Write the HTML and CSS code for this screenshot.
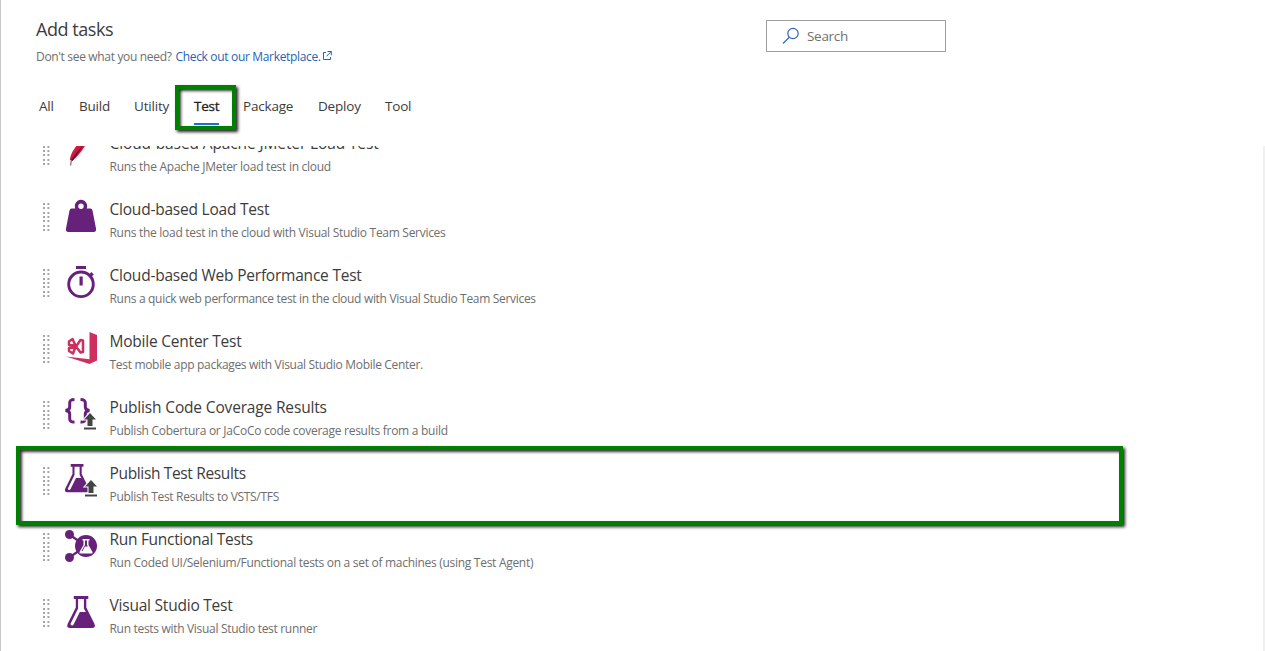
FILE: index.html
```
<!DOCTYPE html>
<html lang="en">
<head>
<meta charset="utf-8">
<title>Add tasks</title>
<link rel="stylesheet" href="styles.css">
</head>
<body>
<svg class="defs" width="0" height="0" aria-hidden="true">
  <defs>
    <g id="grip" fill="#a6a6a6">
      <path id="gripcol" d="M1 1h2v2H1zM1 5h2v2H1zM1 10h2v2H1zM1 14h2v2H1zM1 18h2v2H1zM1 23h2v2H1zM1 27h2v2H1z"/>
      <use href="#gripcol" x="4.4"/>
    </g>
    <g id="flask">
      <path d="M6.500 0h14.500v3h-2v8.500L27 27.500q2 4.500-2.500 4.500h-21.500q-4.500 0-2.500-4.500L8.500 11.500V3h-2z" fill="#68217a"/>
      <path d="M10.800 3h5.800v9.500L18.500 16H12.500L6.300 28.500q-.5 1.300-2.300.8-1.200-.6-.6-1.800L10.800 12.500z" fill="#fff"/>
    </g>
    <g id="upload">
      <path d="M6 0l6 6.500H8.500V13h-5V6.500H0z" fill="#444" stroke="#fff" stroke-width="2" paint-order="stroke"/>
      <path d="M0 14.500h12v2H0z" fill="#444"/>
    </g>
  </defs>
</svg>
<main class="panel">
  <header class="header">
    <div class="heading">
      <h1 class="title">Add tasks</h1>
      <p class="hint"><span class="ask">Don't see what you need?</span> <a class="link">Check out our Marketplace.</a><svg class="external" width="10" height="10" viewBox="0 0 10 10" fill="none" stroke="#2464b4"><path d="M4 1.500H1.500v7h7V6M5.500.5h3.800v3.800M9 .8L4.500 5.300"/></svg></p>
    </div>
    <div class="search">
      <svg width="18" height="18" viewBox="0 0 18 18" fill="none" stroke="#2f68c0" stroke-width="1.200"><circle cx="11" cy="6.500" r="5.200"/><path d="M7.300 10.300L1 16.500"/></svg>
      <span class="placeholder">Search</span>
    </div>
  </header>
  <nav class="tabs">
    <span class="tab t-all">All</span><span class="tab t-build">Build</span><span class="tab t-utility">Utility</span><span class="tab t-test active">Test</span><span class="tab t-package">Package</span><span class="tab t-deploy">Deploy</span><span class="tab t-tool">Tool</span>
  </nav>
  <section class="list">
    <article class="task">
      <svg class="grip" width="9" height="30"><use href="#grip"/></svg>
      <svg class="icon" width="32" height="32" viewBox="0 0 32 32"><path d="M5 26C5 20 10 13 15 8L25 0C22 10 16 20 7 27z" fill="#d6163c"/><path d="M6 26Q12 17 18.500 11Q13 20 7.500 27z" fill="#5b1038"/><path d="M6.500 26L5.500 31.500" stroke="#777" stroke-width="1.300"/></svg>
      <div class="text"><h2 class="name n1">Cloud-based Apache JMeter Load Test</h2><p class="desc d1">Runs the Apache JMeter load test in cloud</p></div>
    </article>
    <article class="task">
      <svg class="grip" width="9" height="30"><use href="#grip"/></svg>
      <svg class="icon" width="32" height="32" viewBox="0 0 32 32"><path d="M6.500 8.500h3.800a6.200 6.200 0 1 1 11.400 0h3.800q1.500 0 2 2L31 28.500q.5 3.500-2.500 3.500h-25Q.5 32 1 28.500L4.500 10.500q.5-2 2-2z" fill="#68217a"/><circle cx="16" cy="6.300" r="2.700" fill="#fff"/></svg>
      <div class="text"><h2 class="name n2">Cloud-based Load Test</h2><p class="desc d2">Runs the load test in the cloud with Visual Studio Team Services</p></div>
    </article>
    <article class="task">
      <svg class="grip" width="9" height="30"><use href="#grip"/></svg>
      <svg class="icon" width="32" height="32" viewBox="0 0 32 32"><circle cx="16" cy="18.300" r="12.300" fill="none" stroke="#68217a" stroke-width="2.900"/><path d="M11 0h10v3H11zM14.500 10.500h3.200v9h-3.200zM24 8.500L26.500 6l2.300 2.500-2.500 2.300z" fill="#68217a"/></svg>
      <div class="text"><h2 class="name n3">Cloud-based Web Performance Test</h2><p class="desc d3">Runs a quick web performance test in the cloud with Visual Studio Team Services</p></div>
    </article>
    <article class="task">
      <svg class="grip" width="9" height="30"><use href="#grip"/></svg>
      <svg class="icon" width="32" height="32" viewBox="0 0 32 32"><path d="M24.500 0L32 3v25.500L24.500 32 1 24.500l23.500 2.700z" fill="#cf2f5f"/><path d="M18 8.500v11.500l-2.500.5-4.500-6 4.500-6.500zM10.500 13.500L4 13V9.500L7.500 7zM10.500 15L4 16v3l4 2.500z" fill="none" stroke="#cf2f5f" stroke-width="2.500" stroke-linejoin="round"/></svg>
      <div class="text"><h2 class="name n4">Mobile Center Test</h2><p class="desc d4">Test mobile app packages with Visual Studio Mobile Center.</p></div>
    </article>
    <article class="task">
      <svg class="grip" width="9" height="30"><use href="#grip"/></svg>
      <svg class="icon" width="32" height="32" viewBox="0 0 32 32"><g fill="none" stroke="#68217a" stroke-width="3"><path d="M9.500 1.500Q4.500 1.500 4.700 5v4q0 3-4.200 3.500 4.200.5 4.200 3.500v4.500q0 4 4.800 3.500M15.500 1.500q5 0 4.800 3.500v4q0 3 4.200 3.500-4.200.5-4.200 3.500v4.500q0 4-4.800 3.500"/></g><use href="#upload" x="19" y="15"/></svg>
      <div class="text"><h2 class="name n5">Publish Code Coverage Results</h2><p class="desc d5">Publish Cobertura or JaCoCo code coverage results from a build</p></div>
    </article>
    <article class="task">
      <svg class="grip" width="9" height="30"><use href="#grip"/></svg>
      <svg class="icon" width="32" height="32" viewBox="0 0 32 32"><use href="#flask" transform="scale(.88)"/><use href="#upload" x="20" y="16"/></svg>
      <div class="text"><h2 class="name n6">Publish Test Results</h2><p class="desc d6">Publish Test Results to VSTS/TFS</p></div>
    </article>
    <article class="task">
      <svg class="grip" width="9" height="30"><use href="#grip"/></svg>
      <svg class="icon" width="32" height="32" viewBox="0 0 32 32"><path d="M5 5l16 11L5 27" fill="none" stroke="#68217a" stroke-width="2.200"/><g fill="#68217a"><circle cx="4.500" cy="4.500" r="4.500"/><circle cx="4.500" cy="27.500" r="4.500"/><circle cx="21" cy="16" r="11"/></g><path d="M17.500 9h7v1.500h-1V15l4 7q.5 1.500-1 1.500h-11q-1.500 0-1-1.500l4-7v-4.500h-1z" fill="#fff"/><path d="M20 10.500h2V15l1 1.500h-3l-2.500 4.500h-1l3.500-6z" fill="#68217a"/></svg>
      <div class="text"><h2 class="name n7">Run Functional Tests</h2><p class="desc d7">Run Coded UI/Selenium/Functional tests on a set of machines (using Test Agent)</p></div>
    </article>
    <article class="task">
      <svg class="grip" width="9" height="30"><use href="#grip"/></svg>
      <svg class="icon" width="32" height="32" viewBox="0 0 32 32"><use href="#flask" x="2.300"/></svg>
      <div class="text"><h2 class="name n8">Visual Studio Test</h2><p class="desc d8">Run tests with Visual Studio test runner</p></div>
    </article>
  </section>
  <div class="callout callout-tab"></div>
  <div class="callout callout-task"></div>
</main>
</body>
</html>
```
FILE: styles.css
```
* { box-sizing: border-box; }
body { margin: 0; background: #fff; font-family: "Open Sans", "Noto Sans", sans-serif; color: #3c3c3c; }
h1, h2, p { margin: 0; font-weight: 400; white-space: nowrap; }
.defs { display: block; }
.panel { position: relative; display: flex; flex-direction: column; height: 651px; overflow: hidden; border-left: 1px solid #c8c8c8; }
.header { display: flex; height: 84px; padding: 17px 0 0 35px; }
.heading { width: 730px; }
.title { font-size: 18px; line-height: 25px; letter-spacing: -.45px; }
.hint { display: flex; margin-top: 6px; font-size: 12px; line-height: 17px; letter-spacing: -.33px; color: #6e6e6e; }
.ask { margin-right: 4px; }
.link { color: #2464b4; }
.external { margin: 3px 0 0 1px; }
.search { display: flex; align-items: center; width: 180px; height: 32px; margin-top: 3px; padding-left: 15px; border: 1px solid #a0a0a0; font-size: 13.500px; letter-spacing: -.3px; color: #707070; }
.placeholder { margin-left: 7px; }
.tabs { display: flex; gap: 24px; height: 62px; padding: 13px 0 0 38px; }
.tab { height: 28px; line-height: 18px; font-size: 13.500px; letter-spacing: -.2px; white-space: nowrap; }
.t-all { width: 16px; }
.t-build { width: 31px; }
.t-utility { width: 36px; }
.t-test { width: 25px; }
.t-package { width: 50px; }
.t-deploy { width: 43px; margin-left: 1px; }
.t-tool { width: 26px; }
.active { color: #222; border-bottom: 2px solid #1e6fd0; -webkit-text-stroke: .3px #222; }
.list { flex: 1; overflow: hidden; border-right: 2px solid #f0f0f0; }
.task { display: flex; height: 66px; padding: 17px 0 0 41px; }
.task:first-child { margin-top: -29px; }
.grip { flex: none; margin-top: 2px; }
.icon { flex: none; margin-left: 14px; overflow: visible; }
.text { width: 600px; margin: -1px 0 0 12.500px; }
.name { font-size: 15.500px; line-height: 20px; letter-spacing: -.22px; }
.n1 { letter-spacing: -.12px; }
.n5 { letter-spacing: -.16px; }
.n6 { letter-spacing: -.35px; }
.n7 { letter-spacing: -.3px; }
.desc { margin-top: 6px; font-size: 12px; line-height: 16px; letter-spacing: -.31px; color: #6e6e6e; }
.d1, .d5 { letter-spacing: -.27px; }
.d2, .d7 { letter-spacing: -.29px; }
.callout { position: absolute; border: 4px solid #008000; box-shadow: 2px 2px 3px #222, inset 2px 2px 3px #333; }
.callout-tab { left: 174px; top: 85px; width: 61px; height: 45px; }
.callout-task { left: 15px; top: 446px; width: 1107px; height: 79px; }
```
